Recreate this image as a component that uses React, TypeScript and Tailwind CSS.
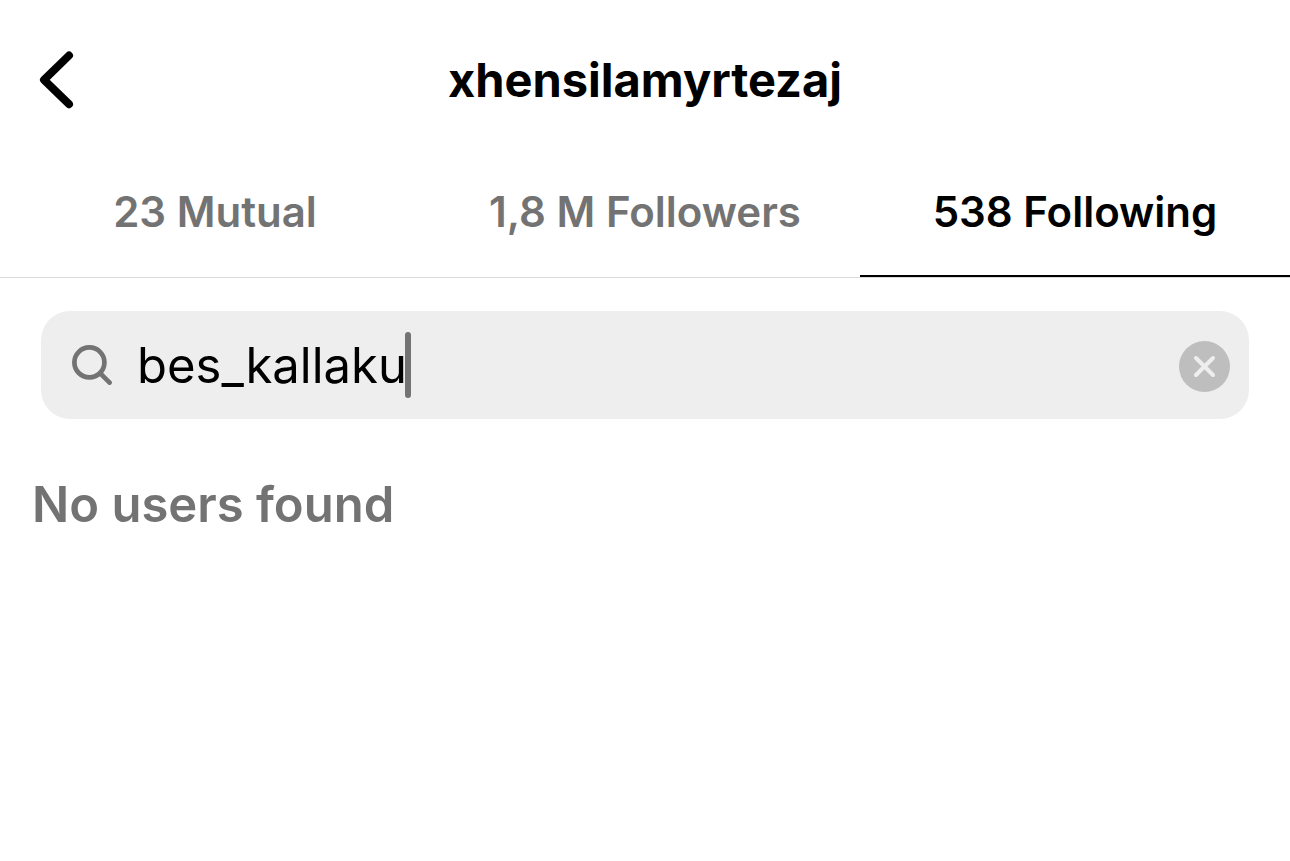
import React, { useState } from "react";

interface TabProps {
  label: string;
  active: boolean;
  onClick: () => void;
}

const tabs = ["23 Mutual", "1,8 M Followers", "538 Following"];

const Tab: React.FC<TabProps> = ({ label, active, onClick }) => {
  return (
    <button
      type="button"
      role="tab"
      aria-selected={active}
      onClick={onClick}
      className={`flex-1 border-b-2 pt-5 pb-[39px] text-[42px] leading-[48px] font-semibold whitespace-nowrap ${
        active ? "border-black text-black" : "border-transparent text-[#737373]"
      }`}
    >
      {label}
    </button>
  );
};

const App: React.FC = () => {
  const [activeTab, setActiveTab] = useState(2);
  const [query, setQuery] = useState("bes_kallaku");

  return (
    <div className="min-h-screen bg-white font-['Inter',sans-serif] text-black">
      <header className="grid grid-cols-[80px_1fr_80px] items-center pt-12 pb-14">
        <button type="button" aria-label="Back" className="pl-9">
          <svg width="40" height="60" viewBox="0 0 40 60" fill="none">
            <path
              d="M33 5.5 8 29.8l25 24.4"
              stroke="black"
              strokeWidth="8"
              strokeLinecap="round"
              strokeLinejoin="round"
            />
          </svg>
        </button>
        <h1 className="text-center text-[47px] leading-[64px] font-bold">
          xhensilamyrtezaj
        </h1>
      </header>

      <div role="tablist" className="flex border-b border-[#dbdbdb]">
        {tabs.map((label, i) => (
          <Tab
            key={label}
            label={label}
            active={i === activeTab}
            onClick={() => setActiveTab(i)}
          />
        ))}
      </div>

      <main className="px-8 pt-[33px]">
        <div className="mx-[9px] flex h-[108px] items-center rounded-[29px] bg-[#eeeeee] pr-[19px] pl-[31px]">
          <svg width="41" height="40" viewBox="0 0 41 40" fill="none">
            <circle cx="17.4" cy="17.4" r="15" stroke="#737373" strokeWidth="4.7" />
            <path
              d="m28.3 28.3 9.3 9.3"
              stroke="#737373"
              strokeWidth="4.7"
              strokeLinecap="round"
            />
          </svg>
          <div className="ml-6 flex min-w-0 flex-1 items-center">
            <input
              type="text"
              aria-label="Search"
              value={query}
              onChange={(e) => setQuery(e.target.value)}
              className="field-sizing-content max-w-full bg-transparent pt-0.5 text-[49px] leading-[60px] caret-transparent outline-none"
            />
            <span className="-ml-0.5 h-[66px] w-[6px] rounded-full bg-[#737373]" />
          </div>
          <button
            type="button"
            aria-label="Clear search"
            className="pt-0.5"
            onClick={() => setQuery("")}
          >
            <svg width="51" height="51" viewBox="0 0 51 51" fill="none">
              <circle cx="25.5" cy="25.5" r="25.5" fill="#bebebe" />
              <path
                d="m17 17 17 17m0-17L17 34"
                stroke="#eeeeee"
                strokeWidth="4"
                strokeLinecap="round"
              />
            </svg>
          </button>
        </div>
        <p className="pt-14 text-[49px] leading-[60px] font-semibold text-[#737373]">
          No users found
        </p>
      </main>
    </div>
  );
};

export default App;
